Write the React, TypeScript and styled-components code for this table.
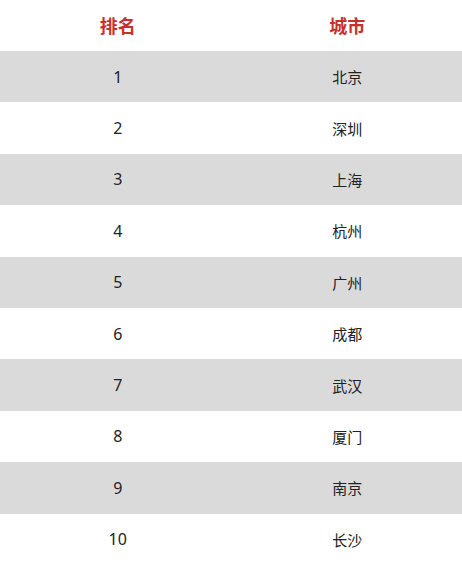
import React, {FC} from 'react';
import styled, {createGlobalStyle} from 'styled-components';

const GlobalStyle = createGlobalStyle`
  html, body {
    margin: 0;
    padding: 0;
    background: #ffffff;
  }
  body {
    font-family: 'Noto Sans', 'Noto Sans CJK SC', sans-serif;
  }
`;

const rankings: {rank: number; city: string}[] = [
  {rank: 1, city: '北京'},
  {rank: 2, city: '深圳'},
  {rank: 3, city: '上海'},
  {rank: 4, city: '杭州'},
  {rank: 5, city: '广州'},
  {rank: 6, city: '成都'},
  {rank: 7, city: '武汉'},
  {rank: 8, city: '厦门'},
  {rank: 9, city: '南京'},
  {rank: 10, city: '长沙'},
];

const Table = styled.div`
  width: 462px;
  display: flex;
  flex-direction: column;
`;

const HeaderRow = styled.div`
  display: grid;
  grid-template-columns: 1fr 1fr;
  height: 51px;
  padding-left: 3px;
  align-items: center;
`;

const HeaderCell = styled.div`
  text-align: center;
  color: #c8302e;
  font-family: 'Noto Sans CJK SC', sans-serif;
  font-weight: 700;
  font-size: 18px;
  padding-bottom: 2px;
`;

const Row = styled.div<{$shaded: boolean}>`
  display: grid;
  grid-template-columns: 1fr 1fr;
  height: 51.4px;
  padding-left: 3px;
  align-items: center;
  background: ${props => (props.$shaded ? '#dadada' : '#ffffff')};
`;

const RankCell = styled.div`
  text-align: center;
  color: #222222;
  font-family: 'Noto Sans', sans-serif;
  font-size: 16px;
`;

const CityCell = styled.div`
  text-align: center;
  color: #222222;
  font-family: 'Noto Sans CJK SC', sans-serif;
  font-size: 15px;
`;

const App: FC = () => {
  return (
    <>
      <GlobalStyle />
      <Table>
        <HeaderRow>
          <HeaderCell>排名</HeaderCell>
          <HeaderCell>城市</HeaderCell>
        </HeaderRow>
        {rankings.map(({rank, city}, i) => (
          <Row key={rank} $shaded={i % 2 === 0}>
            <RankCell>{rank}</RankCell>
            <CityCell>{city}</CityCell>
          </Row>
        ))}
      </Table>
    </>
  );
};

export default App;
